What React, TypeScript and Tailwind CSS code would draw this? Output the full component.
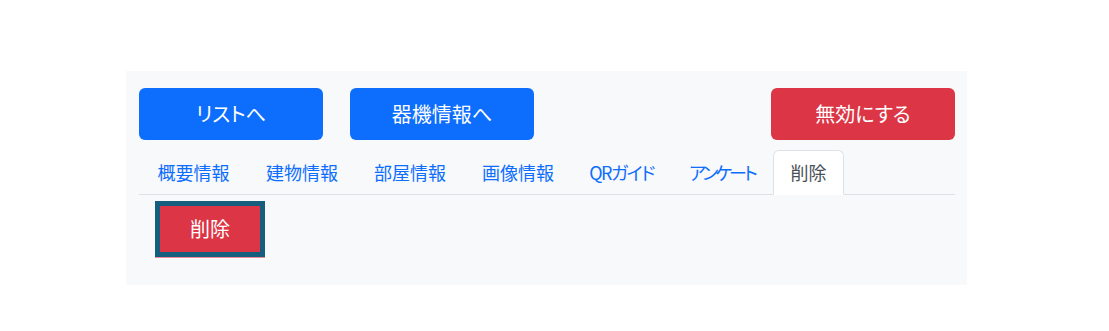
import React from 'react';

const tabs = [
  { label: '概要情報', w: 'w-[109px]' },
  { label: '建物情報', w: 'w-[108px]' },
  { label: '部屋情報', w: 'w-[108px]' },
  { label: '画像情報', w: 'w-[108px]' },
  { label: 'QRガイド', w: 'w-[99px] tracking-[-1.5px]' },
  { label: 'アンケート', w: 'w-[102px] tracking-[-3px]' },
  { label: '削除', w: 'w-[71px]' },
];

export default function App() {
  const active = '削除';

  return (
    <div
      className="w-[1109px] h-[331px] bg-white pt-[71px] pl-[126px] [font-feature-settings:'palt']"
      style={{ fontFamily: '"Noto Sans CJK JP", "Noto Sans", sans-serif' }}
    >
      <div className="w-[841px] h-[214px] bg-[#f8f9fa] pt-[17px] pl-[13px] pr-[12px]">
        <div className="flex items-center">
          <button className="w-[184px] h-[52px] rounded-[6px] bg-[#0d6efd] text-white text-[20px] leading-[30px]">
            リストへ
          </button>
          <button className="ml-[27px] w-[184px] h-[52px] rounded-[6px] bg-[#0d6efd] text-white text-[20px] leading-[30px]">
            器機情報へ
          </button>
          <button className="ml-auto w-[184px] h-[52px] rounded-[6px] bg-[#dc3545] text-white text-[20px] leading-[30px]">
            無効にする
          </button>
        </div>

        <div className="mt-[10px] flex border-b border-[#dee2e6]">
          {tabs.map((t) => (
            <div
              key={t.label}
              className={
                (t.label === active
                  ? 'border-[#dee2e6] border-b-white bg-white rounded-t-[6px] text-[#495057] '
                  : 'border-transparent text-[#0d6efd] ') +
                t.w +
                ' -mb-px flex justify-center whitespace-nowrap py-[8px] text-[18px] leading-[27px] border'
              }
            >
              {t.label}
            </div>
          ))}
        </div>

        <div className="mt-[6px] pl-[16px]">
          <button className="w-[110px] h-[56px] bg-[#dc3545] border-[5px] border-[#155e7e] text-white text-[20px] leading-[30px] shadow-[0_1px_0_#f08a96]">
            削除
          </button>
        </div>
      </div>
    </div>
  );
}
